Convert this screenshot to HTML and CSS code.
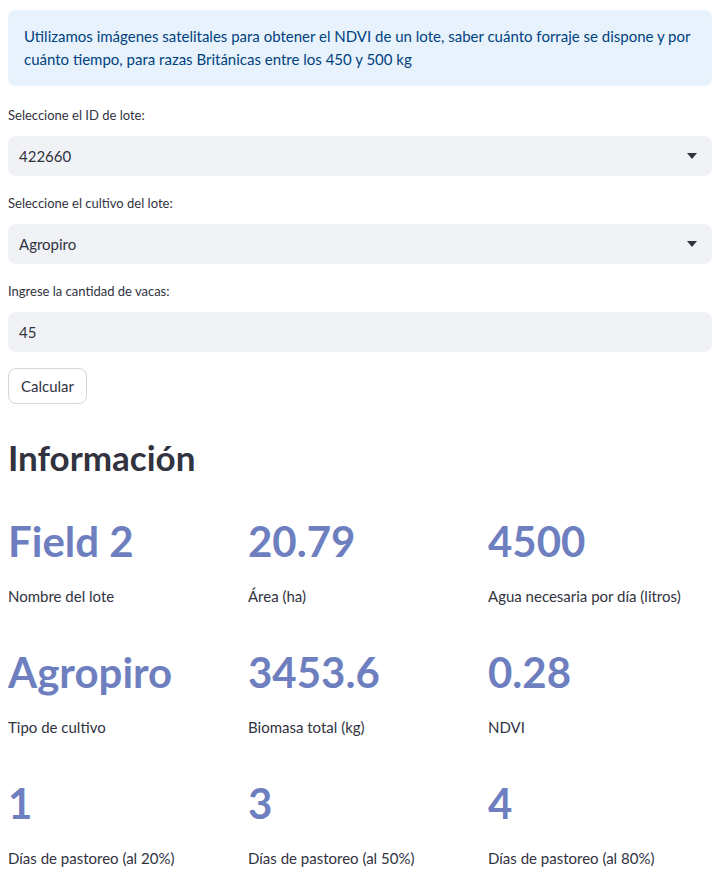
FILE: index.html
```html
<!DOCTYPE html>
<html lang="es">
<head>
<meta charset="utf-8">
<title>Lote</title>
<link rel="stylesheet" href="styles.css">
</head>
<body>
<main class="page">
  <div class="info">Utilizamos imágenes satelitales para obtener el NDVI de un lote, saber cuánto forraje se dispone y por<br>cuánto tiempo, para razas Británicas entre los 450 y 500 kg</div>

  <div class="field">
    <label class="label">Seleccione el ID de lote:</label>
    <div class="select"><span>422660</span><svg class="caret" width="10" height="6" viewBox="0 0 10 6"><path d="M0 0h10L5 6z" fill="#31333f"/></svg></div>
  </div>

  <div class="field">
    <label class="label">Seleccione el cultivo del lote:</label>
    <div class="select"><span>Agropiro</span><svg class="caret" width="10" height="6" viewBox="0 0 10 6"><path d="M0 0h10L5 6z" fill="#31333f"/></svg></div>
  </div>

  <div class="field">
    <label class="label">Ingrese la cantidad de vacas:</label>
    <div class="select"><span>45</span></div>
  </div>

  <div class="actions"><button class="btn">Calcular</button></div>

  <h2 class="heading">Información</h2>

  <div class="metrics">
    <div class="metric"><div class="value">Field 2</div><div class="mlabel">Nombre del lote</div></div>
    <div class="metric"><div class="value">20.79</div><div class="mlabel">Área (ha)</div></div>
    <div class="metric"><div class="value">4500</div><div class="mlabel">Agua necesaria por día (litros)</div></div>
    <div class="metric"><div class="value">Agropiro</div><div class="mlabel">Tipo de cultivo</div></div>
    <div class="metric"><div class="value">3453.6</div><div class="mlabel">Biomasa total (kg)</div></div>
    <div class="metric"><div class="value">0.28</div><div class="mlabel">NDVI</div></div>
    <div class="metric"><div class="value">1</div><div class="mlabel">Días de pastoreo (al 20%)</div></div>
    <div class="metric"><div class="value">3</div><div class="mlabel">Días de pastoreo (al 50%)</div></div>
    <div class="metric"><div class="value">4</div><div class="mlabel">Días de pastoreo (al 80%)</div></div>
  </div>
</main>
</body>
</html>
```

FILE: styles.css
```css
* { box-sizing: border-box; }
html, body { margin: 0; padding: 0; background: #fff; }
body {
  font-family: "Lato", "Noto Sans", sans-serif;
  color: #31333f;
}
.page {
  padding: 10px 8px 0 8px;
  display: flex;
  flex-direction: column;
}
.info {
  background: #e8f2fc;
  color: #004280;
  border-radius: 8px;
  padding: 15px 16px;
  font-size: 15px;
  line-height: 23px;
  margin-bottom: 18px;
}
.field {
  display: flex;
  flex-direction: column;
  margin-bottom: 16px;
}
.label {
  font-size: 13px;
  line-height: 22px;
  margin-bottom: 10px;
}
.select {
  height: 40px;
  background: #f0f2f6;
  border-radius: 8px;
  display: flex;
  align-items: center;
  justify-content: space-between;
  padding: 0 15px 0 11px;
  font-size: 15px;
}
.caret { display: block; }
.actions { display: flex; }
.btn {
  font-family: inherit;
  font-size: 15px;
  color: #31333f;
  background: #fff;
  border: 1px solid #d5d6da;
  border-radius: 8px;
  height: 36px;
  padding: 0 12px;
}
.heading {
  margin: 31px 0 0 0;
  font-size: 35px;
  font-weight: 700;
  line-height: 44px;
}
.metrics {
  margin-top: 37px;
  display: grid;
  grid-template-columns: repeat(3, 1fr);
  column-gap: 16px;
  row-gap: 40px;
}
.value {
  color: #6e7fc0;
  font-size: 42px;
  font-weight: 700;
  line-height: 50px;
}
.mlabel {
  font-size: 15px;
  line-height: 22px;
  margin-top: 19px;
}
```
